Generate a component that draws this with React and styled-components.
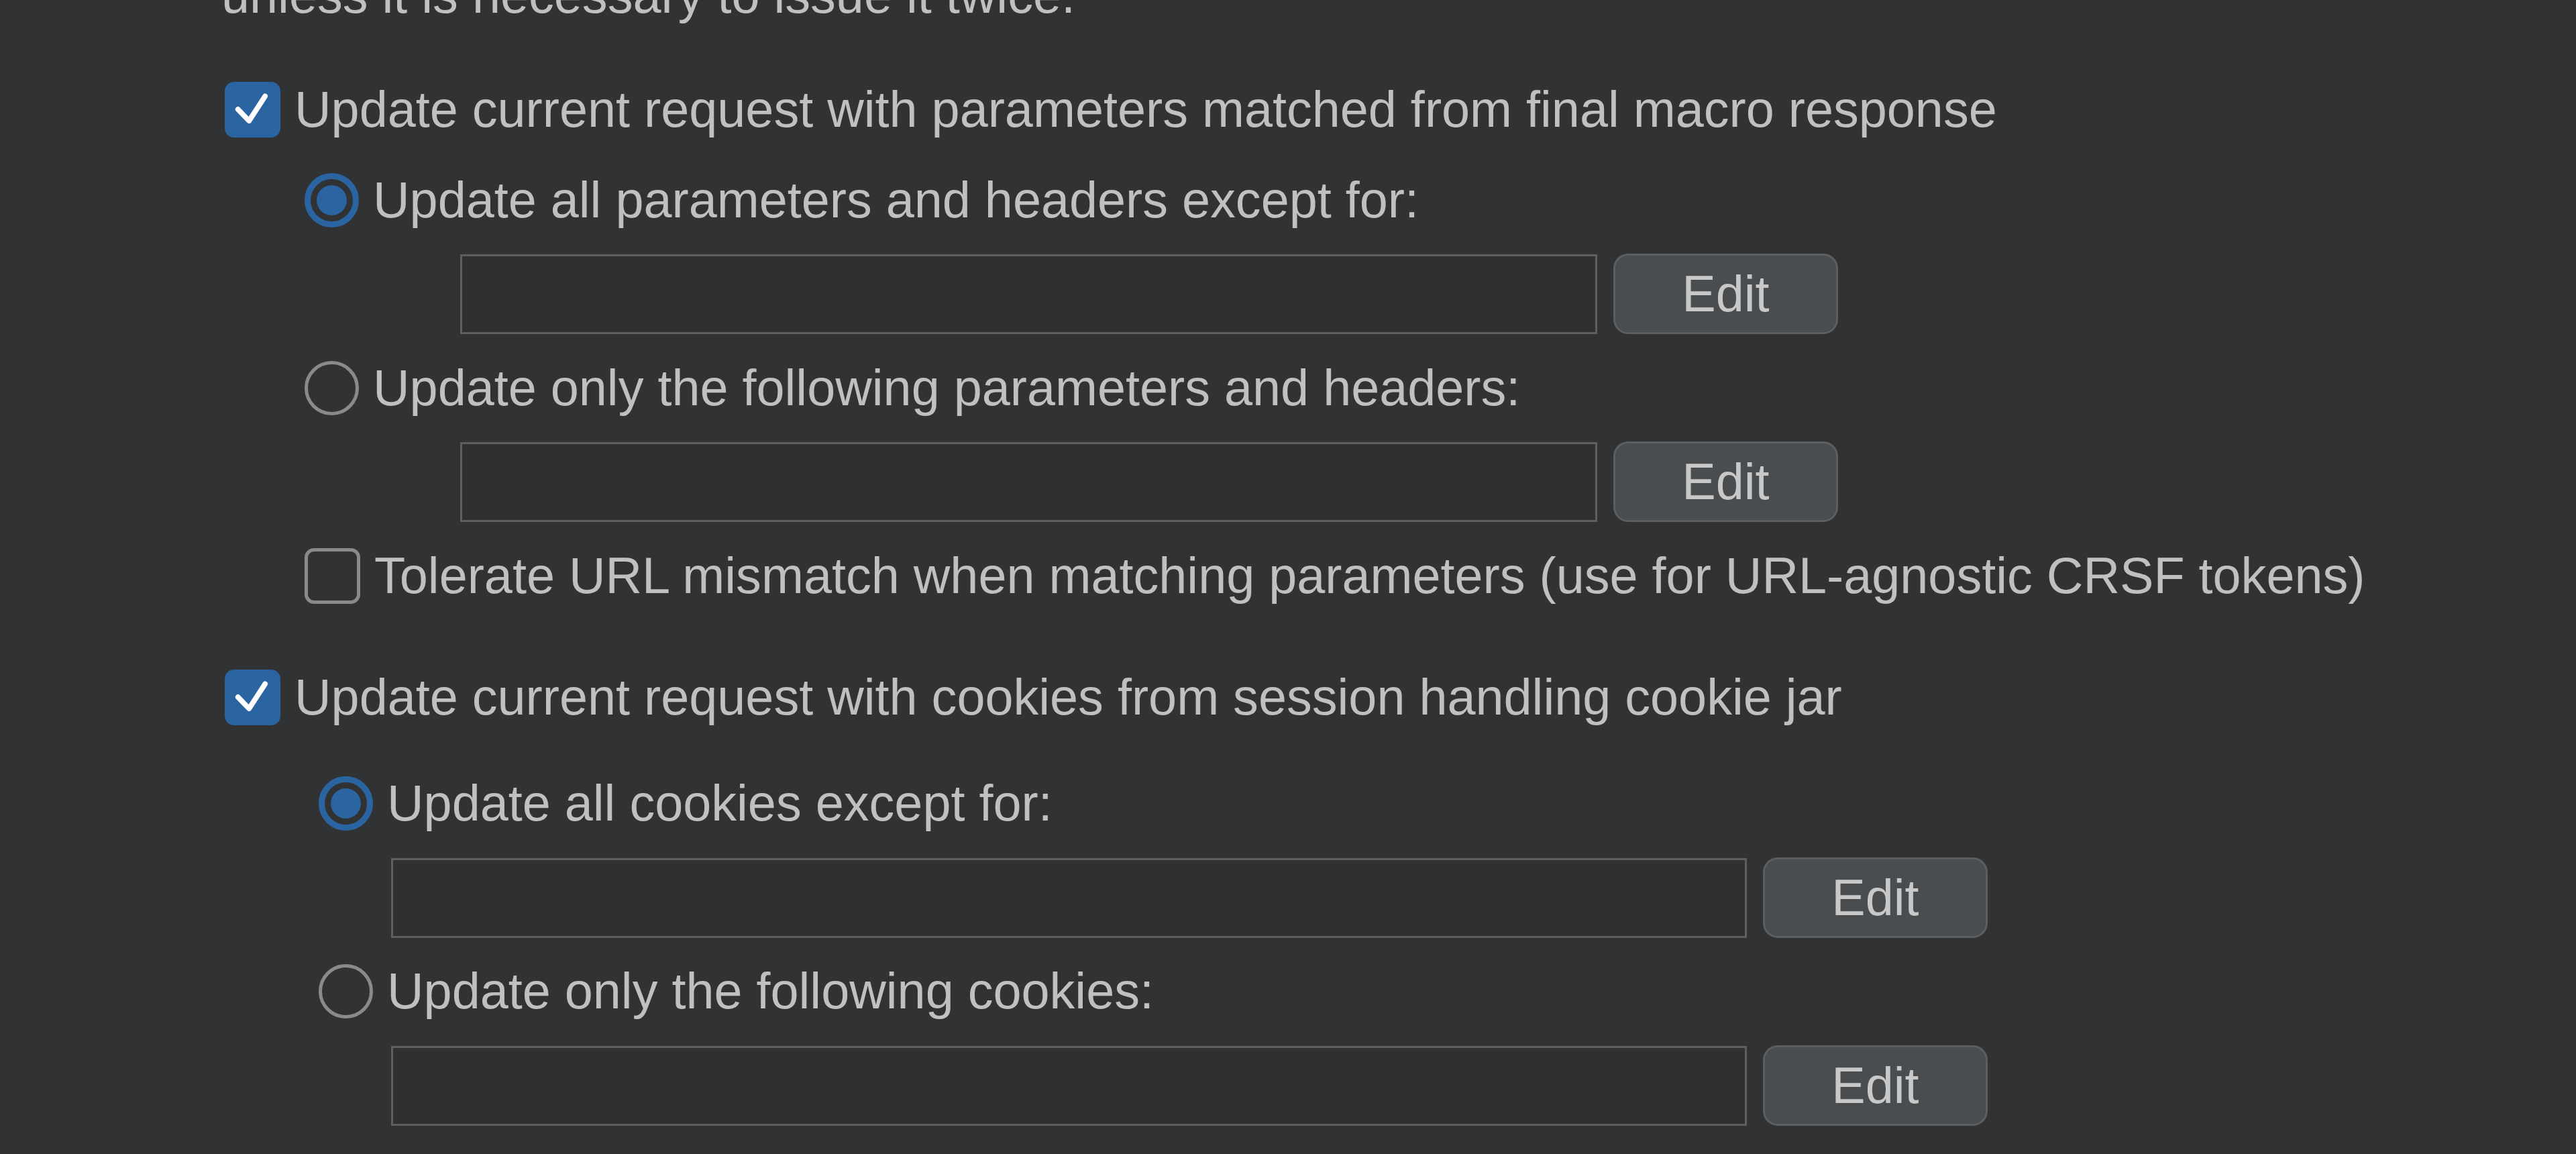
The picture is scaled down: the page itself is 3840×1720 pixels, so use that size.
import { createGlobalStyle } from "styled-components"
import styled from "styled-components"

const GlobalStyle = createGlobalStyle`
    html, body {
        margin: 0;
        padding: 0;
        background-color: #313234;
    }
    * {
        box-sizing: border-box;
    }
`

function Option({ type, checked, indent, top, children }) {
    return (
        <OptionRow $indent={indent} $top={top}>
            {type === "checkbox"
                ? <CheckBox $checked={checked}>
                    {checked &&
                        <svg width="83" height="83" viewBox="0 0 16 16">
                            <path d="M3.8 7.9 L7.0 11.2 L11.6 4.1" fill="none" stroke="#ffffff" strokeWidth="1.5" strokeLinecap="round" strokeLinejoin="round" />
                        </svg>}
                </CheckBox>
                : <Radio $checked={checked} />}
            <Label>{children}</Label>
        </OptionRow>
    )
}

function ListField({ indent, top, width }) {
    return (
        <FieldRow $indent={indent} $top={top}>
            <Field $width={width} />
            <EditButton>Edit</EditButton>
        </FieldRow>
    )
}

export default function App() {
    return (
        <>
            <GlobalStyle />
            <Page>
                <Intro>unless it is necessary to issue it twice.</Intro>

                <Option type="checkbox" checked top={91}>
                    Update current request with parameters matched from final macro response
                </Option>
                <Option type="radio" checked indent={119} top={52}>
                    Update all parameters and headers except for:
                </Option>
                <ListField indent={351} top={38} width={1695} />
                <Option type="radio" indent={119} top={39}>
                    Update only the following parameters and headers:
                </Option>
                <ListField indent={351} top={38} width={1695} />
                <Option type="checkbox" indent={119} top={39}>
                    Tolerate URL mismatch when matching parameters (use for URL-agnostic CRSF tokens)
                </Option>

                <Option type="checkbox" checked top={98}>
                    Update current request with cookies from session handling cookie jar
                </Option>
                <Option type="radio" checked indent={140} top={75}>
                    Update all cookies except for:
                </Option>
                <ListField indent={248} top={39} width={2021} />
                <Option type="radio" indent={140} top={38}>
                    Update only the following cookies:
                </Option>
                <ListField indent={248} top={39} width={2021} />
            </Page>
        </>
    )
}

const Page = styled.div`
    height: 1720px;
    overflow: hidden;
    padding-left: 335px;
    background-color: #313234;
    font-family: "Liberation Sans", Arial, sans-serif;
    font-size: 75.6px;
    color: #c0c0c0;
`
const Intro = styled.div`
    margin: -44px 0 0 -5px;
    line-height: 75px;
    white-space: nowrap;
`
const OptionRow = styled.label`
    display: flex;
    align-items: center;
    gap: 21px;
    height: 83px;
    margin-top: ${props => props.$top || 0}px;
    margin-left: ${props => props.$indent || 0}px;
`
const Label = styled.span`
    line-height: 75px;
    white-space: nowrap;
`
const CheckBox = styled.span`
    width: 83px;
    height: 83px;
    flex-shrink: 0;
    border-radius: 14px;
    background-color: ${props => props.$checked ? "#2a64a1" : "transparent"};
    border: ${props => props.$checked ? "none" : "5px solid #8a8a8a"};
    display: flex;
    justify-content: center;
    align-items: center;
    svg {
        display: block;
    }
`
const Radio = styled.span`
    width: 81px;
    height: 81px;
    flex-shrink: 0;
    border-radius: 50%;
    border: ${props => props.$checked ? "9px solid #2a64a1" : "5px solid #8a8a8a"};
    display: flex;
    justify-content: center;
    align-items: center;
    &::after {
        content: "";
        display: ${props => props.$checked ? "block" : "none"};
        width: 45px;
        height: 45px;
        border-radius: 50%;
        background-color: #2a64a1;
    }
`
const FieldRow = styled.div`
    display: flex;
    align-items: center;
    gap: 24px;
    height: 120px;
    margin-top: ${props => props.$top || 0}px;
    margin-left: ${props => props.$indent || 0}px;
`
const Field = styled.div`
    width: ${props => props.$width}px;
    height: 119px;
    border: 3px solid #5e5f61;
    background-color: #2f3032;
`
const EditButton = styled.div`
    width: 335px;
    height: 120px;
    border: 3px solid #5c5e60;
    border-radius: 22px;
    background-color: #4a4d50;
    color: #c8c8c8;
    display: flex;
    justify-content: center;
    align-items: center;
    line-height: 75px;
`
